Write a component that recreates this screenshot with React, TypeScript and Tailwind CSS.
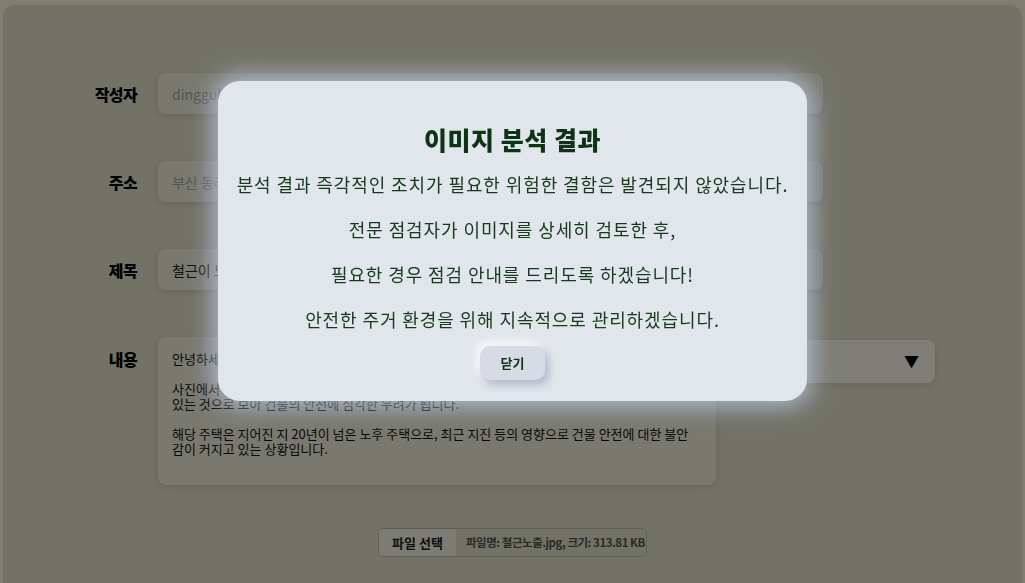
const KR = "font-['Noto_Sans_CJK_KR','Noto_Sans',sans-serif]"

const body = `안녕하세요. 부산 동래구에 거주하는 주민입니다.

사진에서 보시는 것처럼 외벽 일부가 떨어져 내부 철근이 드러나 녹슬어 
있는 것으로 보아 건물의 안전에 심각한 우려가 됩니다.

해당 주택은 지어진 지 20년이 넘은 노후 주택으로, 최근 지진 등의 영향으로 건물 안전에 대한 불안감이 커지고 있는 상황입니다.`

function Field({ label, children, top }: { label: string; children: React.ReactNode; top?: boolean }) {
  return (
    <div className={`flex gap-[21px] ${top ? 'items-start' : 'items-center'}`}>
      <label className={`w-[134px] text-right text-[16px] font-black tracking-[-0.04em] text-black ${top ? 'mt-[10px]' : ''}`}>
        {label}
      </label>
      {children}
    </div>
  )
}

const inputCls =
  'h-[41px] w-[665px] rounded-lg bg-[#f2f2de] px-[14px] text-[14px] text-[#1a1a1a] shadow-[0_2px_6px_rgba(0,0,0,0.12)] outline-none placeholder:text-[#a8a8a4]'

export default function App() {
  return (
    <div className={`h-screen overflow-hidden bg-[#fefee0] px-[3px] pt-[5px] ${KR}`}>
      <div className="min-h-[620px] rounded-xl bg-[#e4e4ce] pt-[68px]">
        <div className="flex flex-col gap-[47px]">
          <Field label="작성자">
            <input className={inputCls} placeholder="dinggul@example.com" />
          </Field>
          <Field label="주소">
            <input className={inputCls} placeholder="부산 동래구 명륜로 123" />
          </Field>
          <Field label="제목">
            <input className={inputCls} defaultValue="철근이 노출된 외벽 점검 요청" />
          </Field>
          <Field label="내용" top>
            <textarea
              className="h-[148px] w-[558px] resize-none rounded-lg bg-[#f2f2de] py-[14px] pr-[16px] pl-[14px] text-[13px] leading-[15px] text-[#111] shadow-[0_2px_6px_rgba(0,0,0,0.12)] outline-none"
              defaultValue={body}
            />
            <div className="mt-[3px] ml-[-1px] flex h-[43px] w-[199px] items-center justify-between rounded-lg bg-[#fcfcec] pl-[16px] pr-[16px] shadow-[0_2px_6px_rgba(0,0,0,0.12)]">
              <span className="text-[14px] text-[#9a9a9a]">철근노출</span>
              <span className="text-[15px] text-black">▼</span>
            </div>
          </Field>
        </div>

        <div className="mt-[43px] flex justify-center">
          <div className="flex h-[29px] w-[269px] items-center overflow-hidden rounded-[5px] border border-[#c0c0b4]">
            <button className="h-full w-[77px] bg-[#f8f8e8] text-[13px] font-bold text-[#222]">파일 선택</button>
            <span className="ml-[10px] whitespace-nowrap text-[11.5px] font-bold tracking-[-0.04em] text-[#555]">
              파일명: 철근노출.jpg, 크기: 313.81 KB
            </span>
          </div>
        </div>
      </div>

      {/* 분석 결과 모달 */}
      <div className="fixed inset-0 flex justify-center bg-black/50 pt-[81px]">
        <div className="flex h-[320px] w-[589px] flex-col items-center rounded-[22px] bg-[#e1e5ec] pt-[42px] shadow-[0_0_22px_6px_rgba(190,205,232,0.75)]">
          <h2 className="text-[25px] leading-[32px] font-black tracking-[0.02em] text-[#0e3316]">이미지 분석 결과</h2>
          <div className="mt-[16px] flex flex-col items-center gap-[18px] text-[18px] leading-[27px] tracking-[0.05em] text-[#173a1e]">
            <p>분석 결과 즉각적인 조치가 필요한 위험한 결함은 발견되지 않았습니다.</p>
            <p>전문 점검자가 이미지를 상세히 검토한 후,</p>
            <p>필요한 경우 점검 안내를 드리도록 하겠습니다!</p>
            <p>안전한 주거 환경을 위해 지속적으로 관리하겠습니다.</p>
          </div>
          <button className="mt-[13px] h-[34px] w-[65px] rounded-[10px] bg-[#d6dce6] text-[13px] font-bold text-[#0e3316] shadow-[4px_5px_9px_rgba(140,150,175,0.55),-4px_-4px_9px_rgba(255,255,255,0.9)]">
            닫기
          </button>
        </div>
      </div>
    </div>
  )
}
